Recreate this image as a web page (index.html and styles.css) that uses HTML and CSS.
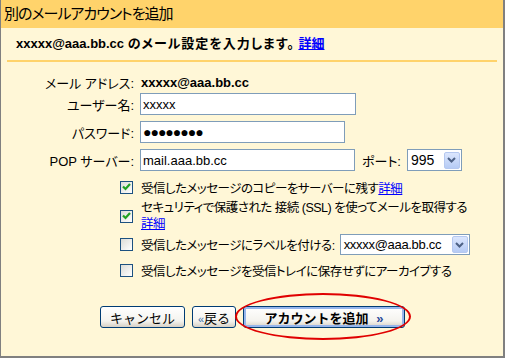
FILE: index.html
```html
<!DOCTYPE html>
<html lang="ja">
<head>
    <meta charset="UTF-8">
    <title>別のメールアカウントを追加</title>
    <link rel="stylesheet" href="styles.css">
</head>
<body>
    <div class="frame">
        <div class="header">別のメールアカウントを追加</div>

        <div class="intro">
            xxxxx@aaa.bb.cc <span class="intro-jp">のメール設定を入力します。</span> <a href="#">詳細</a>
        </div>

        <div class="form">
            <div class="row row-email">
                <span class="label">メール アドレス:</span>
                <span class="value">xxxxx@aaa.bb.cc</span>
            </div>
            <div class="row row-user">
                <span class="label">ユーザー名:</span>
                <input type="text" class="field field-user" value="xxxxx">
            </div>
            <div class="row">
                <span class="label">パスワード:</span>
                <input type="text" class="field field-pass" value="●●●●●●●●">
            </div>
            <div class="row">
                <span class="label">POP サーバー:</span>
                <input type="text" class="field field-pop" value="mail.aaa.bb.cc">
                <span class="port-label">ポート:</span>
                <div class="select select-port">
                    <span class="select-text">995</span>
                    <span class="select-arrow"><svg width="9" height="6" viewBox="0 0 9 6"><path d="M1 1 L4.5 4.5 L8 1" fill="none" stroke="#4d6185" stroke-width="2"/></svg></span>
                </div>
            </div>

            <div class="check check-1">
                <span class="cb on"><svg width="9" height="8" viewBox="0 0 9 8"><path d="M1 3.5 L3.5 6 L8 1" fill="none" stroke="#21a121" stroke-width="2.2"/></svg></span>
                <span class="check-text">受信したメッセージのコピーをサーバーに残す<a href="#">詳細</a></span>
            </div>
            <div class="check check-2">
                <span class="cb on"><svg width="9" height="8" viewBox="0 0 9 8"><path d="M1 3.5 L3.5 6 L8 1" fill="none" stroke="#21a121" stroke-width="2.2"/></svg></span>
                <span class="check-text">セキュリティで保護された 接続 (SSL) を使ってメールを取得する<br><a href="#">詳細</a></span>
            </div>
            <div class="check check-3">
                <span class="cb"></span>
                <span class="check-text">受信したメッセージにラベルを付ける:</span>
                <div class="select select-label">
                    <span class="select-text">xxxxx@aaa.bb.cc</span>
                    <span class="select-arrow"><svg width="9" height="6" viewBox="0 0 9 6"><path d="M1 1 L4.5 4.5 L8 1" fill="none" stroke="#4d6185" stroke-width="2"/></svg></span>
                </div>
            </div>
            <div class="check check-4">
                <span class="cb"></span>
                <span class="check-text">受信したメッセージを受信トレイに保存せずにアーカイブする</span>
            </div>

            <div class="buttons">
                <button class="btn btn-cancel">キャンセル</button>
                <button class="btn btn-back"><span class="arr">«</span>戻る</button>
                <button class="btn btn-add">アカウントを追加 <span class="arr">»</span></button>
                <span class="mark"></span>
            </div>
        </div>
    </div>
</body>
</html>
```

FILE: styles.css
```css
body {
    margin: 0;
    font-family: "Liberation Sans", "Noto Sans CJK JP", sans-serif;
    font-size: 13px;
    color: #000;
}
.frame {
    width: 505px;
    height: 358px;
    box-sizing: border-box;
    background-color: #fff7d7;
    border-left: 1px solid #808080;
    border-right: 2px solid #808080;
    border-bottom: 2px solid #808080;
    font-feature-settings: "palt";
}
.header {
    height: 28px;
    line-height: 27px;
    background-color: #ffd36b;
    font-size: 15px;
    letter-spacing: -1px;
    padding-left: 3px;
}
.intro {
    margin: 0 6px;
    padding: 8px 0 0 9px;
    height: 24px;
    line-height: 16px;
    font-weight: bold;
    border-bottom: 2px solid #ffd36b;
}
.intro-jp {
    letter-spacing: 1px;
}
a {
    color: #0000ff;
    text-decoration: underline;
}
.form {
    padding-top: 10px;
}
.row {
    display: flex;
    align-items: center;
    height: 22px;
    margin-top: 6px;
}
.row-email {
    height: 21px;
    margin-top: 0;
}
.row-user {
    margin-top: 0;
}
.label {
    width: 133px;
    text-align: right;
    margin-right: 6px;
    flex-shrink: 0;
}
.value {
    font-weight: bold;
    padding-left: 1px;
}
.field {
    height: 22px;
    box-sizing: border-box;
    border: 1px solid #7f9db9;
    background: #fff;
    font-family: inherit;
    font-size: 13px;
    padding: 0 2px;
    color: #000;
    margin: 0;
}
.field-user {
    width: 216px;
}
.field-pass {
    width: 205px;
    font-size: 14px;
    letter-spacing: -1px;
}
.field-pop {
    width: 215px;
}
.port-label {
    margin-left: 7px;
    margin-right: 6px;
}
.select {
    display: flex;
    align-items: center;
    justify-content: space-between;
    box-sizing: border-box;
    border: 1px solid #7f9db9;
    background: #fff;
    padding: 0 1px 0 3px;
}
.select-port {
    width: 55px;
    height: 22px;
}
.select-label {
    width: 130px;
    height: 21px;
    margin-left: 5px;
}
.select-text {
    font-size: 14px;
}
.select-label .select-text {
    font-size: 13px;
    letter-spacing: -0.3px;
}
.select-arrow {
    display: flex;
    align-items: center;
    justify-content: center;
    width: 16px;
    height: 17px;
    box-sizing: border-box;
    border: 1px solid #b5c8f0;
    border-radius: 2px;
    background: linear-gradient(#dbe6fd, #b6cbf5);
}
.check {
    display: flex;
    align-items: center;
    padding-left: 119px;
}
.check-text {
    font-size: 12.5px;
    letter-spacing: -0.5px;
}
.check-1 {
    height: 20px;
    margin-top: 6px;
}
.check-2 {
    height: 32px;
    margin-top: 3px;
    line-height: 16px;
}
.check-3 {
    height: 21px;
    margin-top: 2px;
}
.check-4 {
    height: 16px;
    margin-top: 7px;
}
.cb {
    display: flex;
    align-items: center;
    justify-content: center;
    width: 13px;
    height: 13px;
    box-sizing: border-box;
    border: 1px solid #1c5180;
    background: linear-gradient(135deg, #dcdcd7, #ffffff);
    margin-right: 8px;
    flex-shrink: 0;
}
.buttons {
    position: relative;
    display: flex;
    gap: 7px;
    margin-top: 28px;
    padding-left: 99px;
}
.btn {
    height: 22px;
    box-sizing: border-box;
    border: 1px solid #003c74;
    border-radius: 3px;
    background: linear-gradient(#ffffff, #f4f3ee 70%, #d6d0c5);
    font-family: inherit;
    font-size: 13px;
    color: #000;
    padding: 0;
    margin: 0;
}
.btn-cancel {
    width: 85px;
}
.btn-back {
    width: 44px;
}
.btn-back .arr {
    color: #3a6ea5;
    font-size: 11px;
}
.btn-add {
    width: 162px;
    font-weight: bold;
    box-shadow: inset 0 0 0 2px #97b6ec;
}
.btn-add .arr {
    color: #2a4a9a;
    margin-left: 4px;
}
.mark {
    position: absolute;
    left: 234px;
    top: -13px;
    width: 176px;
    height: 47px;
    box-sizing: border-box;
    border: 2px solid #e00000;
    border-radius: 50%;
}
```
